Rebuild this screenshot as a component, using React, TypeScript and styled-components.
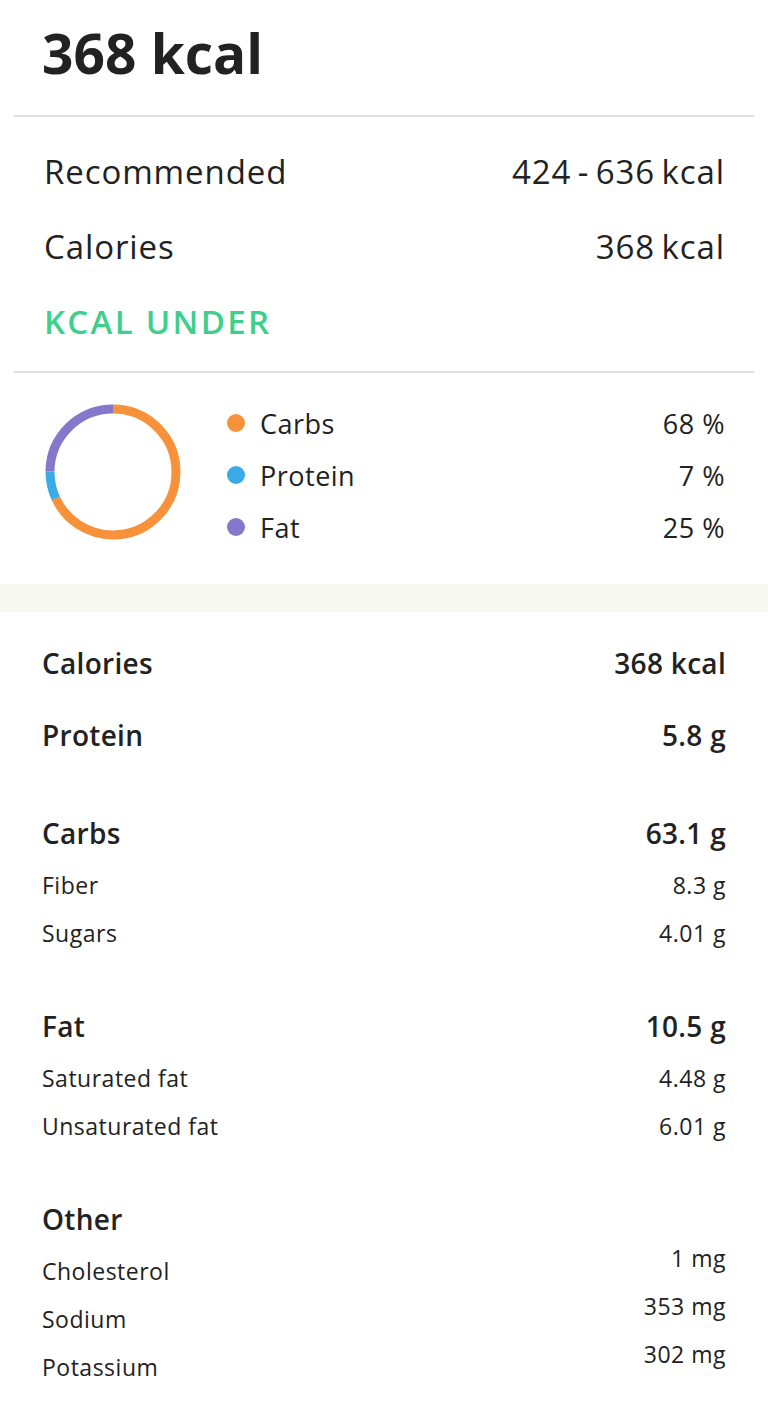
import React from 'react'
import styled, { createGlobalStyle } from 'styled-components'

const GlobalStyle = createGlobalStyle`
  body {
    margin: 0;
    background: #fff;
    font-family: "Open Sans", Lato, sans-serif;
    color: #222;
  }
`

const macros = [
  { name: 'Carbs', value: 68, color: '#f7923a' },
  { name: 'Protein', value: 7, color: '#3aabe6' },
  { name: 'Fat', value: 25, color: '#8378c9' },
]

type Nutrient = { label: string; value: string; raised?: boolean }
type Group = { title: string; value?: string; gap: number; items: Nutrient[] }

const groups: Group[] = [
  { title: 'Calories', value: '368 kcal', gap: 27, items: [] },
  { title: 'Protein', value: '5.8 g', gap: 24, items: [] },
  {
    title: 'Carbs',
    value: '63.1 g',
    gap: 50,
    items: [
      { label: 'Fiber', value: '8.3 g' },
      { label: 'Sugars', value: '4.01 g' },
    ],
  },
  {
    title: 'Fat',
    value: '10.5 g',
    gap: 45,
    items: [
      { label: 'Saturated fat', value: '4.48 g' },
      { label: 'Unsaturated fat', value: '6.01 g' },
    ],
  },
  {
    title: 'Other',
    gap: 45,
    items: [
      { label: 'Cholesterol', value: '1 mg', raised: true },
      { label: 'Sodium', value: '353 mg', raised: true },
      { label: 'Potassium', value: '302 mg', raised: true },
    ],
  },
]

const Donut = () => {
  const r = 63
  const c = 2 * Math.PI * r
  let offset = 0
  return (
    <DonutSvg viewBox="0 0 136 136">
      <g transform="rotate(-90 68 68)">
        {macros.map((m) => {
          const len = (m.value / 100) * c
          const el = (
            <circle
              key={m.name}
              cx={68}
              cy={68}
              r={r}
              fill="none"
              stroke={m.color}
              strokeWidth={9}
              strokeDasharray={`${len} ${c - len}`}
              strokeDashoffset={-offset}
            />
          )
          offset += len
          return el
        })}
      </g>
    </DonutSvg>
  )
}

export default function App() {
  return (
    <Page>
      <GlobalStyle />
      <Header>
        <Title>368 kcal</Title>
      </Header>
      <Divider />
      <Summary>
        <SummaryRow>
          <span>Recommended</span>
          <Value>424 - 636 kcal</Value>
        </SummaryRow>
        <SummaryRow>
          <span>Calories</span>
          <Value>368 kcal</Value>
        </SummaryRow>
        <Status>KCAL UNDER</Status>
      </Summary>
      <Divider />
      <MacroSection>
        <Donut />
        <Legend>
          {macros.map((m) => (
            <LegendRow key={m.name}>
              <Dot color={m.color} />
              <LegendName>{m.name}</LegendName>
              <span>{m.value} %</span>
            </LegendRow>
          ))}
        </Legend>
      </MacroSection>
      <Band />
      <Nutrients>
        {groups.map((g) => (
          <GroupBlock key={g.title} $gap={g.gap}>
            <GroupHeader $hasItems={g.items.length > 0}>
              <span>{g.title}</span>
              {g.value && <span>{g.value}</span>}
            </GroupHeader>
            {g.items.map((n) => (
              <SubRow key={n.label}>
                <span>{n.label}</span>
                <SubValue $raised={n.raised}>{n.value}</SubValue>
              </SubRow>
            ))}
          </GroupBlock>
        ))}
      </Nutrients>
    </Page>
  )
}

const Page = styled.div`
  width: 768px;
  min-height: 1404px;
  background: #fff;
`

const Header = styled.div`
  padding: 20px 42px 29px;
`

const Title = styled.h1`
  margin: 0;
  font-size: 55px;
  line-height: 66px;
  font-weight: 700;
  color: #222;
`

const Divider = styled.div`
  margin: 0 14px;
  height: 2px;
  background: #e0e0e0;
`

const Summary = styled.div`
  padding: 17px 43px 12px 44px;
`

const SummaryRow = styled.div`
  display: flex;
  justify-content: space-between;
  align-items: center;
  height: 75px;
  font-size: 33px;
  letter-spacing: 0.9px;
`

const Value = styled.span`
  word-spacing: -3px;
`

const Status = styled.div`
  height: 75px;
  display: flex;
  align-items: center;
  font-size: 33px;
  font-weight: 600;
  letter-spacing: 2.3px;
  color: #3ecf8b;
`

const MacroSection = styled.div`
  display: flex;
  align-items: flex-start;
  padding: 24px 43px 31px 45px;
`

const DonutSvg = styled.svg`
  width: 136px;
  height: 136px;
  margin-top: 7px;
  flex-shrink: 0;
`

const Legend = styled.div`
  flex: 1;
  margin-left: 46px;
  display: flex;
  flex-direction: column;
`

const LegendRow = styled.div`
  display: flex;
  align-items: center;
  height: 52px;
  font-size: 27px;
  letter-spacing: 0.5px;
`

const Dot = styled.span<{ color: string }>`
  width: 18px;
  height: 18px;
  border-radius: 50%;
  background: ${({ color }) => color};
  margin-right: 15px;
`

const LegendName = styled.span`
  flex: 1;
`

const Band = styled.div`
  height: 28px;
  background: #f8f8f3;
`

const Nutrients = styled.div`
  padding: 0 42px 30px;
`

const GroupBlock = styled.div<{ $gap: number }>`
  margin-top: ${({ $gap }) => $gap}px;
`

const GroupHeader = styled.div<{ $hasItems: boolean }>`
  display: flex;
  justify-content: space-between;
  align-items: center;
  height: 48px;
  margin-bottom: ${({ $hasItems }) => ($hasItems ? 4 : 0)}px;
  font-size: 28px;
  font-weight: 600;
  letter-spacing: 0.3px;
`

const SubRow = styled.div`
  display: flex;
  justify-content: space-between;
  align-items: center;
  height: 48px;
  font-size: 23px;
  letter-spacing: 0.5px;
`

const SubValue = styled.span<{ $raised?: boolean }>`
  align-self: ${({ $raised }) => ($raised ? 'flex-start' : 'center')};
  line-height: ${({ $raised }) => ($raised ? '22px' : 'normal')};
`
